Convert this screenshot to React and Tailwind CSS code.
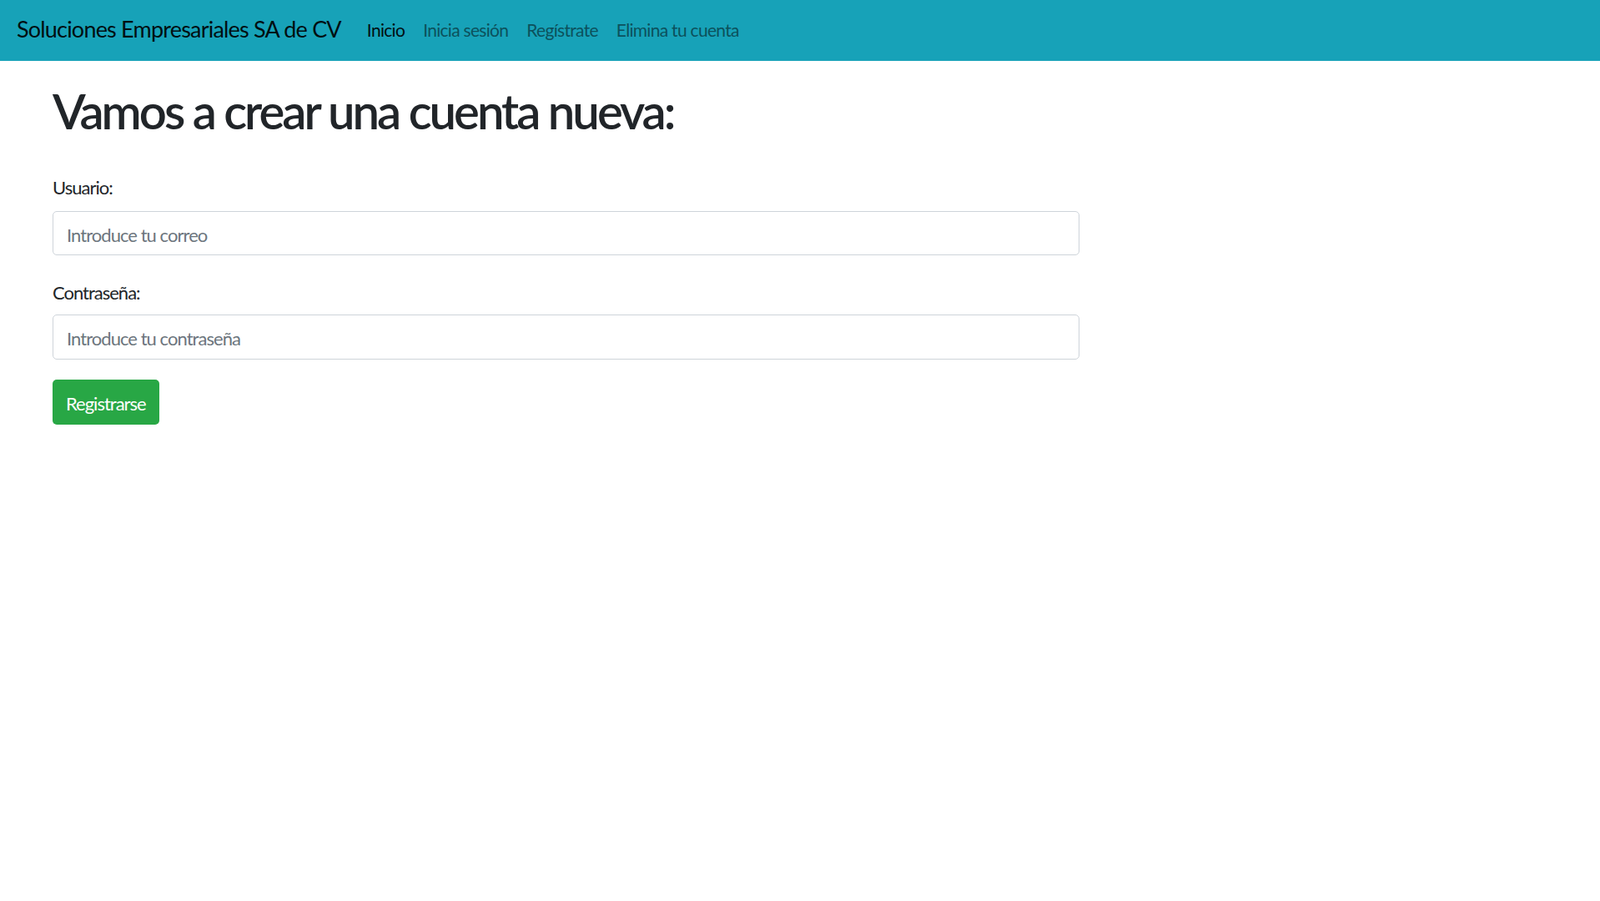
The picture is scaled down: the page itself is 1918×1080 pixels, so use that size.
import React from 'react';

const links = [
  { label: 'Inicio', active: true },
  { label: 'Inicia sesión' },
  { label: 'Regístrate' },
  { label: 'Elimina tu cuenta' },
];

export default function App() {
  return (
    <div className="min-h-screen bg-white font-['Lato',sans-serif] text-[#212529]">
      <header className="h-[73px] bg-[#17a2b8] flex items-center pl-[20px]">
        <a href="#" className="text-[27px] tracking-[-0.8px] text-[#020f12] mr-[31px] pb-[2px]">
          Soluciones Empresariales SA de CV
        </a>
        <nav className="flex items-center gap-[22px] pb-[1px]">
          {links.map((l) => (
            <a
              key={l.label}
              href="#"
              className={
                'text-[21px] tracking-[-0.7px] ' +
                (l.active ? 'text-[#020f12]' : 'text-[#0c515c]')
              }
            >
              {l.label}
            </a>
          ))}
        </nav>
      </header>

      <main className="pl-[63px]">
        <h1 className="mt-[25px] text-[58px] leading-[1.2] font-semibold tracking-[-3px] text-[#212529]">
          Vamos a crear una cuenta nueva:
        </h1>

        <form className="w-[1231px] mt-[40px]" onSubmit={(e) => e.preventDefault()}>
          <label className="block text-[22px] leading-[33px] tracking-[-1px]">Usuario:</label>
          <input
            type="email"
            placeholder="Introduce tu correo"
            className="mt-[12px] block w-full h-[53px] border border-[#ced4da] rounded-[5px] px-[16px] pt-[4px] text-[22px] tracking-[-0.95px] placeholder:text-[#6c757d] outline-none"
          />

          <label className="block mt-[28px] text-[22px] leading-[33px] tracking-[-1px]">Contraseña:</label>
          <input
            type="password"
            placeholder="Introduce tu contraseña"
            className="mt-[10px] block w-full h-[54px] border border-[#ced4da] rounded-[5px] px-[16px] pt-[4px] text-[22px] tracking-[-0.95px] placeholder:text-[#6c757d] outline-none"
          />

          <button
            type="submit"
            className="mt-[24px] h-[54px] px-[16px] pt-[3px] bg-[#28a745] text-white text-[22px] tracking-[-1px] rounded-[5px]"
          >
            Registrarse
          </button>
        </form>
      </main>
    </div>
  );
}
